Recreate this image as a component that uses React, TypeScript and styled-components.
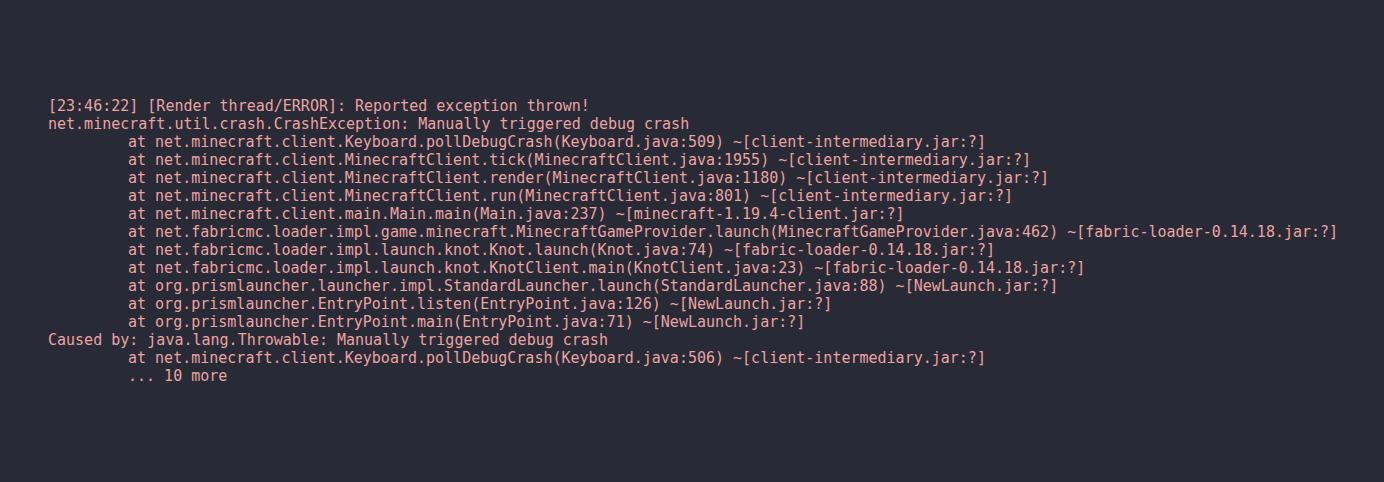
import React from "react";
import styled, { createGlobalStyle } from "styled-components";

const Global = createGlobalStyle`
  html, body { margin: 0; padding: 0; background: #282a36; }
  #root { min-height: 100vh; }
`;

const Screen = styled.main`
  height: 482px;
  display: flex;
  align-items: center;
  padding-left: 48px;
  box-sizing: border-box;
  background: #282a36;
`;

const Log = styled.pre`
  margin: 0;
  font-family: "DejaVu Sans Mono", monospace;
  font-size: 15px;
  line-height: 18px;
  color: #eba3a3;
  tab-size: 80px;
  -moz-tab-size: 80px;
  white-space: pre;
`;

const Line = styled.div`
  height: 18px;
`;

const lines = [
  "[23:46:22] [Render thread/ERROR]: Reported exception thrown!",
  "net.minecraft.util.crash.CrashException: Manually triggered debug crash",
  "\tat net.minecraft.client.Keyboard.pollDebugCrash(Keyboard.java:509) ~[client-intermediary.jar:?]",
  "\tat net.minecraft.client.MinecraftClient.tick(MinecraftClient.java:1955) ~[client-intermediary.jar:?]",
  "\tat net.minecraft.client.MinecraftClient.render(MinecraftClient.java:1180) ~[client-intermediary.jar:?]",
  "\tat net.minecraft.client.MinecraftClient.run(MinecraftClient.java:801) ~[client-intermediary.jar:?]",
  "\tat net.minecraft.client.main.Main.main(Main.java:237) ~[minecraft-1.19.4-client.jar:?]",
  "\tat net.fabricmc.loader.impl.game.minecraft.MinecraftGameProvider.launch(MinecraftGameProvider.java:462) ~[fabric-loader-0.14.18.jar:?]",
  "\tat net.fabricmc.loader.impl.launch.knot.Knot.launch(Knot.java:74) ~[fabric-loader-0.14.18.jar:?]",
  "\tat net.fabricmc.loader.impl.launch.knot.KnotClient.main(KnotClient.java:23) ~[fabric-loader-0.14.18.jar:?]",
  "\tat org.prismlauncher.launcher.impl.StandardLauncher.launch(StandardLauncher.java:88) ~[NewLaunch.jar:?]",
  "\tat org.prismlauncher.EntryPoint.listen(EntryPoint.java:126) ~[NewLaunch.jar:?]",
  "\tat org.prismlauncher.EntryPoint.main(EntryPoint.java:71) ~[NewLaunch.jar:?]",
  "Caused by: java.lang.Throwable: Manually triggered debug crash",
  "\tat net.minecraft.client.Keyboard.pollDebugCrash(Keyboard.java:506) ~[client-intermediary.jar:?]",
  "\t... 10 more",
];

export default function App() {
  return (
    <>
      <Global />
      <Screen>
        <Log>
          {lines.map((l, i) => (
            <Line key={i}>{l}</Line>
          ))}
        </Log>
      </Screen>
    </>
  );
}
